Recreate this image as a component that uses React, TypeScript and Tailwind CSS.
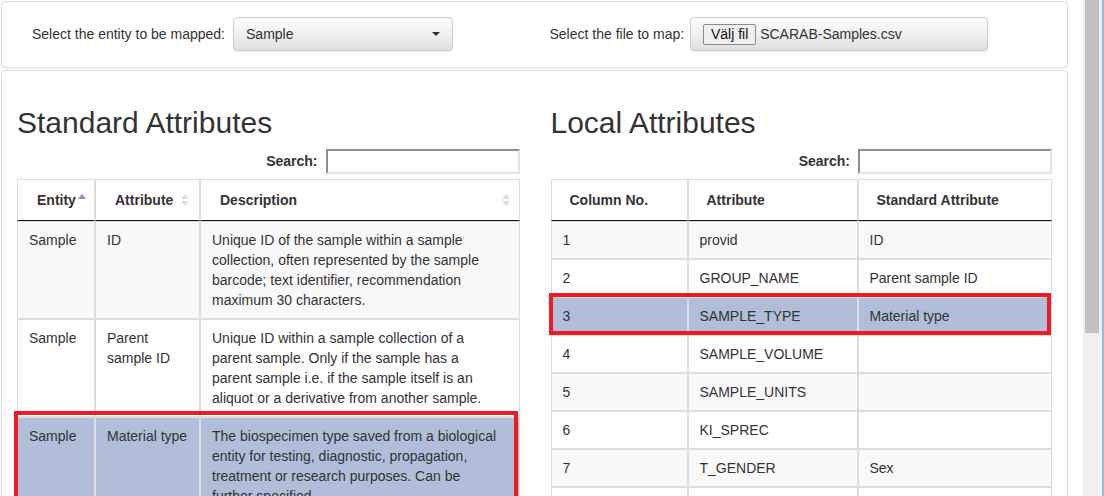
import React from 'react';

interface StdRow {
  entity: string;
  attribute: string;
  description: string;
}

interface LocalRow {
  no: string;
  attribute: string;
  standard: string;
}

const standardRows: StdRow[] = [
  {
    entity: 'Sample',
    attribute: 'ID',
    description:
      'Unique ID of the sample within a sample collection, often represented by the sample barcode; text identifier, recommendation maximum 30 characters.',
  },
  {
    entity: 'Sample',
    attribute: 'Parent sample ID',
    description:
      'Unique ID within a sample collection of a parent sample. Only if the sample has a parent sample i.e. if the sample itself is an aliquot or a derivative from another sample.',
  },
  {
    entity: 'Sample',
    attribute: 'Material type',
    description:
      'The biospecimen type saved from a biological entity for testing, diagnostic, propagation, treatment or research purposes. Can be further specified.',
  },
];

const localRows: LocalRow[] = [
  { no: '1', attribute: 'provid', standard: 'ID' },
  { no: '2', attribute: 'GROUP_NAME', standard: 'Parent sample ID' },
  { no: '3', attribute: 'SAMPLE_TYPE', standard: 'Material type' },
  { no: '4', attribute: 'SAMPLE_VOLUME', standard: '' },
  { no: '5', attribute: 'SAMPLE_UNITS', standard: '' },
  { no: '6', attribute: 'KI_SPREC', standard: '' },
  { no: '7', attribute: 'T_GENDER', standard: 'Sex' },
  { no: '', attribute: '', standard: '' },
];

// DataTables style sort marker
const SortIcon = ({ active }: { active?: boolean }) =>
  active ? (
    <svg width="8" height="14" viewBox="0 0 8 14" className="shrink-0">
      <polygon points="4,1 8,6 0,6" fill="#8a8fd8" />
    </svg>
  ) : (
    <svg width="8" height="14" viewBox="0 0 8 14" className="shrink-0">
      <polygon points="4,1 8,6 0,6" fill="#dcdcdc" />
      <polygon points="0,8 8,8 4,13" fill="#dcdcdc" />
    </svg>
  );

const SearchBox = () => (
  <div className="flex h-[24px] items-center justify-end">
    <span className="mr-[8px] font-bold">Search:</span>
    <input
      type="text"
      className="h-[25px] w-[194px] border-2 border-t-[#8f8f8f] border-l-[#8f8f8f] border-r-[#e6e6e6] border-b-[#e6e6e6] bg-white outline-none"
    />
  </div>
);

const thBase = 'border border-[#ddd] border-b-[#111] py-[10px] text-left font-bold leading-[20px]';
const tdBase = 'border border-[#ddd] py-[8px] pl-[11px] pr-[10px] align-top leading-[20px]';

export default function App() {
  return (
    <div className="flex h-[496px] w-[1104px] overflow-hidden bg-white font-['Liberation_Sans',Arial,sans-serif] text-[14px] text-[#333]">
      <div className="w-[1083px] shrink-0 pl-px pt-px pr-[15px]">
        {/* Mapping selectors */}
        <div className="grid h-[67px] grid-cols-2 gap-[30px] rounded-[4px] border border-[#ddd] px-[30px] pt-[15px] shadow-[0_1px_1px_rgba(0,0,0,0.05)]">
          <div className="flex h-[34px] items-center">
            <span className="mr-[8px]">Select the entity to be mapped:</span>
            <div className="flex h-[34px] w-[220px] items-center justify-between rounded-[4px] border border-[#ccc] bg-linear-to-b from-white to-[#e0e0e0] pl-[12px] pr-[12px] shadow-[0_1px_1px_rgba(0,0,0,0.075)]">
              <span>Sample</span>
              <svg width="8" height="4" viewBox="0 0 8 4">
                <polygon points="0,0 8,0 4,4" fill="#333" />
              </svg>
            </div>
          </div>
          <div className="flex h-[34px] items-center">
            <span className="mr-[6px]">Select the file to map:</span>
            <div className="flex h-[34px] w-[298px] items-center rounded-[4px] border border-[#ccc] bg-linear-to-b from-white to-[#e0e0e0] pl-[12px] shadow-[0_1px_1px_rgba(0,0,0,0.075)]">
              <span className="flex h-[21px] w-[53px] items-center justify-center rounded-[2px] border border-[#8a8a8a] bg-[#efefef] text-[#111]">
                Välj fil
              </span>
              <span className="ml-[4px]">SCARAB-Samples.csv</span>
            </div>
          </div>
        </div>

        {/* Attribute tables */}
        <div className="mt-[2px] grid h-[500px] grid-cols-2 gap-[30px] rounded-[4px] border border-[#ddd] px-[15px] pt-[15px]">
          <div>
            <h2 className="mt-[20px] mb-[10px] text-[30px] leading-[33px]">Standard Attributes</h2>
            <SearchBox />
            <div className="relative mt-[6px]">
              <table className="w-full table-fixed border-separate border-spacing-0">
                <thead>
                  <tr>
                    <th className={`${thBase} w-[78px] pl-[19px] pr-[8px]`}>
                      <div className="flex items-center justify-between">
                        <span>Entity</span>
                        <SortIcon active />
                      </div>
                    </th>
                    <th className={`${thBase} w-[105px] pl-[19px] pr-[10px]`}>
                      <div className="flex items-center justify-between">
                        <span>Attribute</span>
                        <SortIcon />
                      </div>
                    </th>
                    <th className={`${thBase} pl-[19px] pr-[9px]`}>
                      <div className="flex items-center justify-between">
                        <span>Description</span>
                        <SortIcon />
                      </div>
                    </th>
                  </tr>
                </thead>
                <tbody>
                  {standardRows.map((row, i) => (
                    <tr
                      key={i}
                      className={i === 2 ? 'bg-[#b0bed9]' : i % 2 === 0 ? 'bg-[#f9f9f9]' : 'bg-white'}
                    >
                      <td className={tdBase}>{row.entity}</td>
                      <td className={tdBase}>{row.attribute}</td>
                      <td className={`${tdBase} pr-[20px]`}>{row.description}</td>
                    </tr>
                  ))}
                </tbody>
              </table>
              <div className="absolute left-[-3px] top-[232px] h-[100px] w-[504px] border-4 border-[#ed1c24]" />
            </div>
          </div>

          <div className="pl-px">
            <h2 className="mt-[20px] mb-[10px] text-[30px] leading-[33px]">Local Attributes</h2>
            <SearchBox />
            <div className="relative mt-[6px]">
              <table className="w-full table-fixed border-separate border-spacing-0">
                <thead>
                  <tr>
                    <th className={`${thBase} w-[137px] px-[18px]`}>Column No.</th>
                    <th className={`${thBase} w-[170px] px-[18px]`}>Attribute</th>
                    <th className={`${thBase} px-[18px]`}>Standard Attribute</th>
                  </tr>
                </thead>
                <tbody>
                  {localRows.map((row, i) => (
                    <tr
                      key={i}
                      className={i === 2 ? 'bg-[#b0bed9]' : i % 2 === 0 ? 'bg-[#f9f9f9]' : 'bg-white'}
                    >
                      <td className={tdBase}>{row.no || '\u00a0'}</td>
                      <td className={tdBase}>{row.attribute}</td>
                      <td className={tdBase}>{row.standard}</td>
                    </tr>
                  ))}
                </tbody>
              </table>
              <div className="absolute left-[-2px] top-[114px] h-[42px] w-[502px] border-4 border-[#ed1c24]" />
            </div>
          </div>
        </div>
      </div>

      {/* Window scrollbar */}
      <div className="w-[18px] shrink-0 bg-[#f0f0f0] px-[2px]">
        <div className="h-[333px] bg-[#c1c1c1]" />
      </div>
      <div className="flex w-[3px] shrink-0">
        <div className="w-px bg-[#e6edf6]" />
        <div className="w-[2px] bg-[#9db7d8]" />
      </div>
    </div>
  );
}
